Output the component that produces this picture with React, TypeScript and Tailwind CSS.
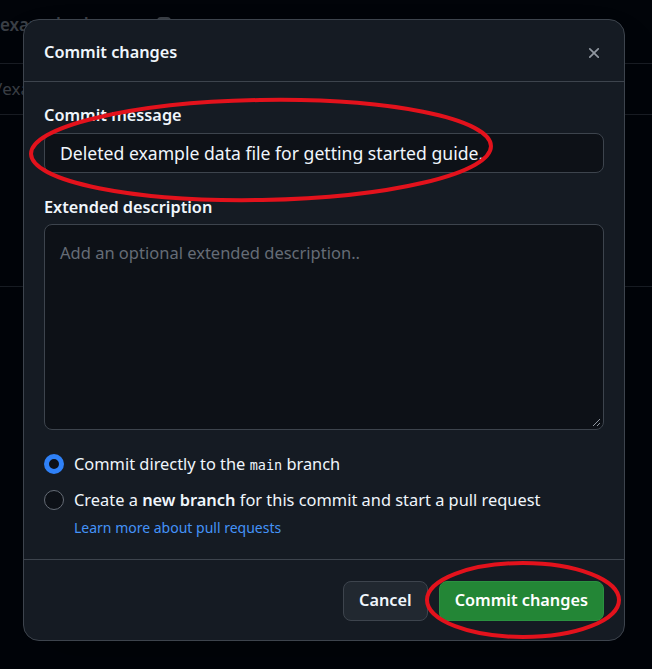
import React from 'react';

const font = { fontFamily: '"Noto Sans", "Liberation Sans", sans-serif' };

function Radio({ checked }: { checked?: boolean }) {
  return checked ? (
    <span className="w-[20px] h-[20px] rounded-full border-[5px] border-[#2f81f7] bg-[#0d1117] shrink-0" />
  ) : (
    <span className="w-[20px] h-[20px] rounded-full border border-[#656c76] bg-[#0d1117] shrink-0" />
  );
}

export default function App() {
  return (
    <div className="relative w-[652px] h-[669px] overflow-hidden bg-[#010409] text-[#f0f6fc]" style={font}>
      {/* página por trás do diálogo */}
      <div className="opacity-40 text-[#9198a1] text-[17px]">
        <div className="h-[64px] border-b border-[#3d444d] flex items-center pb-[14px] gap-[14px]">
          <span className="font-semibold">example_data.txt</span>
          <span className="w-[14px] h-[16px] border-2 border-[#9198a1] rounded-sm" />
        </div>
        <div className="h-[51px] border-b border-[#3d444d] flex items-center -ml-[4px]">
          <span>/example_data.txt</span>
        </div>
        <div className="h-[172px] border-b border-[#3d444d]" />
      </div>

      {/* diálogo */}
      <div className="absolute left-[23px] top-[19px] w-[602px] h-[622px] bg-[#151b23] border border-[#3d444d] rounded-[16px] flex flex-col shadow-2xl">
        <div className="h-[62px] flex items-center justify-between pl-[20px] pr-[21px] pt-[4px] border-b border-[#3d444d] shrink-0">
          <h2 className="text-[16.3px] font-semibold">Commit changes</h2>
          <svg width="18" height="18" viewBox="0 0 16 16" fill="#9198a1">
            <path d="M3.72 3.72a.75.75 0 0 1 1.06 0L8 6.94l3.22-3.22a.749.749 0 0 1 1.275.326.749.749 0 0 1-.215.734L9.06 8l3.22 3.22a.749.749 0 0 1-.326 1.275.749.749 0 0 1-.734-.215L8 9.06l-3.22 3.22a.751.751 0 0 1-1.042-.018.751.751 0 0 1-.018-1.042L6.94 8 3.72 4.78a.75.75 0 0 1 0-1.06Z" />
          </svg>
        </div>

        <div className="px-[20px] pt-[21px] pb-[21px] flex flex-col border-b border-[#3d444d]">
          <label className="text-[16.3px] font-semibold leading-[24px]">Commit message</label>
          <div className="mt-[6px] h-[40px] rounded-[8px] border border-[#3d444d] bg-[#0d1117] flex items-center px-[15px] text-[17.6px]">
            Deleted example data file for getting started guide.
          </div>

          <label className="mt-[22px] text-[16.3px] font-semibold leading-[24px]">Extended description</label>
          <div className="relative mt-[5px] h-[206px] rounded-[8px] border border-[#3d444d] bg-[#0d1117] px-[15px] pt-[16px] text-[16.5px] text-[#656c76]">
            Add an optional extended description..
            <svg className="absolute right-[2px] bottom-[2px]" width="9" height="9" viewBox="0 0 9 9" stroke="#9198a1" strokeWidth="1">
              <path d="M8 1 L1 8 M8 5 L5 8" />
            </svg>
          </div>

          <div className="mt-[20px] h-[28px] flex items-center gap-[10px] text-[16.4px]">
            <Radio checked />
            <span>
              Commit directly to the{' '}
              <code className="text-[13.5px]" style={{ fontFamily: '"DejaVu Sans Mono", monospace' }}>main</code> branch
            </span>
          </div>
          <div className="mt-[8px] h-[28px] flex items-center gap-[10px] text-[16.4px]">
            <Radio />
            <span>
              Create a <b className="font-semibold">new branch</b> for this commit and start a pull request
            </span>
          </div>
          <a className="ml-[30px] mt-[4px] text-[14px] leading-[20px] text-[#4493f8]">Learn more about pull requests</a>
        </div>

        <div className="flex-1 flex items-center justify-end gap-[11px] pr-[20px] pt-[1px]">
          <button className="h-[40px] px-[15px] rounded-[8px] border border-[#3d444d] bg-[#212830] text-[16.3px] font-semibold text-[#f0f6fc]">
            Cancel
          </button>
          <button className="h-[40px] px-[15px] rounded-[8px] border border-[#2a9140] bg-[#238636] text-[16.3px] font-semibold text-white">
            Commit changes
          </button>
        </div>
      </div>

      {/* marcações vermelhas */}
      <svg className="absolute inset-0 pointer-events-none" width="652" height="669">
        <ellipse cx="261" cy="150" rx="230" ry="50" transform="rotate(-1 261 150)" fill="none" stroke="#e3121c" strokeWidth="4" />
        <ellipse cx="523" cy="600" rx="96" ry="37" fill="none" stroke="#e3121c" strokeWidth="4" />
      </svg>
    </div>
  );
}
